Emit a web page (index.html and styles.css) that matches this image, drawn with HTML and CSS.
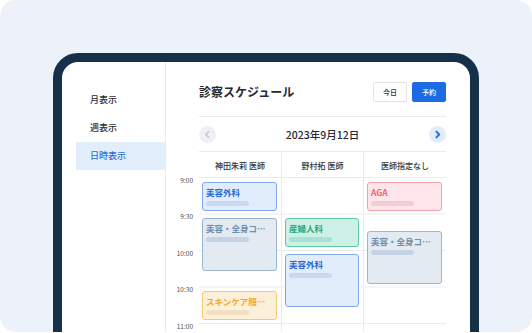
FILE: index.html
```html
<!DOCTYPE html>
<html lang="ja">
<head>
  <meta charset="UTF-8">
  <title>診察スケジュール</title>
  <link rel="stylesheet" href="styles.css">
</head>
<body>
  <div class="stage">
    <div class="device">
      <aside class="sidebar">
        <div class="nav-item">月表示</div>
        <div class="nav-item">週表示</div>
        <div class="nav-item active">日時表示</div>
      </aside>

      <main class="main">
        <div class="title-row">
          <h1>診察スケジュール</h1>
          <div class="actions">
            <button class="btn">今日</button>
            <button class="btn primary">予約</button>
          </div>
        </div>

        <div class="date-nav">
          <span class="arrow prev">
            <svg width="17" height="17" viewBox="0 0 17 17"><path d="M9.6 5.6 L6.8 8.5 L9.6 11.4" fill="none" stroke="#b7bdc8" stroke-width="1.2" stroke-linecap="round" stroke-linejoin="round"/></svg>
          </span>
          <span class="date">2023年9月12日</span>
          <span class="arrow next">
            <svg width="17" height="17" viewBox="0 0 17 17"><path d="M7.4 5.6 L10.2 8.5 L7.4 11.4" fill="none" stroke="#2a6fdb" stroke-width="2" stroke-linecap="round" stroke-linejoin="round"/></svg>
          </span>
        </div>

        <div class="schedule">
          <div class="corner"></div>
          <div class="head">神田朱莉 医師</div>
          <div class="head">野村拓 医師</div>
          <div class="head">医師指定なし</div>

          <div class="times">
            <div class="time">9:00</div>
            <div class="time">9:30</div>
            <div class="time">10:00</div>
            <div class="time">10:30</div>
            <div class="time">11:00</div>
          </div>

          <div class="col">
            <div class="event blue" style="top: 4px; height: 29px;">
              <div class="event-title">美容外科</div>
              <div class="bar"></div>
            </div>
            <div class="event gray" style="top: 40px; height: 53px;">
              <div class="event-title">美容・全身コ…</div>
              <div class="bar"></div>
            </div>
            <div class="event orange" style="top: 113px; height: 29px;">
              <div class="event-title">スキンケア顔…</div>
              <div class="bar"></div>
            </div>
          </div>

          <div class="col">
            <div class="event green" style="top: 40px; height: 29px;">
              <div class="event-title">産婦人科</div>
              <div class="bar"></div>
            </div>
            <div class="event blue" style="top: 76px; height: 53px;">
              <div class="event-title">美容外科</div>
              <div class="bar"></div>
            </div>
          </div>

          <div class="col">
            <div class="event pink" style="top: 4px; height: 29px;">
              <div class="event-title">AGA</div>
              <div class="bar"></div>
            </div>
            <div class="event gray" style="top: 53px; height: 53px;">
              <div class="event-title">美容・全身コ…</div>
              <div class="bar"></div>
            </div>
          </div>
        </div>
      </main>
    </div>
  </div>
</body>
</html>
```

FILE: styles.css
```css
body {
  margin: 0;
  background-color: #fff;
  font-family: "Noto Sans CJK JP", "Noto Sans", sans-serif;
  color: #222;
}

.stage {
  width: 532px;
  height: 332px;
  border-radius: 16px;
  background-color: #edf1f9;
  overflow: hidden;
  padding: 53px 0 0 53px;
  box-sizing: border-box;
}

.device {
  width: 408px;
  height: 300px;
  border: 9px solid #17304a;
  border-radius: 25px;
  background-color: #fff;
  display: flex;
  overflow: hidden;
}

/* sidebar */
.sidebar {
  width: 103px;
  flex-shrink: 0;
  border-right: 1px solid #e8ebf0;
  padding-top: 24px;
}

.nav-item {
  height: 28px;
  line-height: 28px;
  margin-left: 14px;
  padding-left: 14px;
  font-size: 9px;
  font-weight: 500;
  color: #2b2f36;
}

.nav-item.active {
  background-color: #e3eefc;
  color: #2a6fdb;
}

/* main */
.main {
  flex: 1;
  padding: 20px 24px 0 33px;
}

.title-row {
  display: flex;
  justify-content: space-between;
  align-items: center;
  padding-bottom: 14px;
  border-bottom: 1px solid #e8ebf0;
}

.title-row h1 {
  margin: 0;
  font-size: 12px;
  font-weight: 700;
  line-height: 20px;
  color: #252a31;
}

.actions {
  display: flex;
  gap: 5px;
}

.btn {
  width: 34px;
  height: 20px;
  padding: 0;
  border: 1px solid #e1e4ea;
  border-radius: 2px;
  background-color: #fff;
  font-family: inherit;
  font-size: 7px;
  font-weight: 500;
  color: #333;
}

.btn.primary {
  background-color: #1d6be3;
  border-color: #1d6be3;
  color: #fff;
}

.date-nav {
  height: 34px;
  display: flex;
  justify-content: space-between;
  align-items: center;
  border-bottom: 1px solid #e8ebf0;
}

.arrow {
  width: 17px;
  height: 17px;
  border-radius: 50%;
  display: flex;
}

.arrow.prev {
  background-color: #eef0f4;
}

.arrow.next {
  background-color: #e2edfc;
}

.date {
  font-size: 10.5px;
  font-weight: 500;
  color: #252a31;
}

/* schedule grid */
.schedule {
  display: grid;
  grid-template-columns: 25px 82px 82px 83px;
  margin-left: -25px;
}

.head {
  height: 25px;
  line-height: 27px;
  border-bottom: 1px solid #e8ebf0;
  text-align: center;
  font-size: 8px;
  font-weight: 500;
  color: #30353c;
}

.head + .head,
.col + .col {
  border-left: 1px solid #e8ebf0;
}

.times {
  margin-top: -2.5px;
}

.time {
  height: 36.5px;
  line-height: 8px;
  padding-right: 6px;
  text-align: right;
  font-size: 6.5px;
  color: #4a4f57;
}

.col {
  position: relative;
  height: 160px;
  background-image: linear-gradient(to bottom, transparent 35.5px, #e8ebf0 35.5px);
  background-size: 100% 36.5px;
}

.event {
  position: absolute;
  left: 3px;
  right: 4px;
  box-sizing: border-box;
  border: 1px solid;
  border-radius: 3px;
  padding: 4px 3px 0;
}

.event-title {
  font-size: 8.5px;
  line-height: 11px;
  font-weight: 700;
  white-space: nowrap;
}

.bar {
  width: 43px;
  height: 4.5px;
  margin-top: 3px;
  border-radius: 3px;
}

.event.blue {
  background-color: #e2edfc;
  border-color: #7fa9ea;
  color: #2767d6;
}

.event.blue .bar {
  background-color: #c9d9f0;
}

.event.gray {
  background-color: #e4eaf1;
  border-color: #9bb5d0;
  color: #6f8dae;
}

.event.gray .bar {
  background-color: #c5d4e4;
}

.event.orange {
  background-color: #fdf0da;
  border-color: #f6c670;
  color: #f3a626;
}

.event.orange .bar {
  background-color: #f3e0c2;
}

.event.green {
  background-color: #cdf1e6;
  border-color: #5cc9a4;
  color: #22a57b;
}

.event.green .bar {
  background-color: #a9e2d0;
}

.event.pink {
  background-color: #fde5e9;
  border-color: #f4a3ae;
  color: #f2637a;
}

.event.pink .bar {
  background-color: #f2cdd5;
}
```
